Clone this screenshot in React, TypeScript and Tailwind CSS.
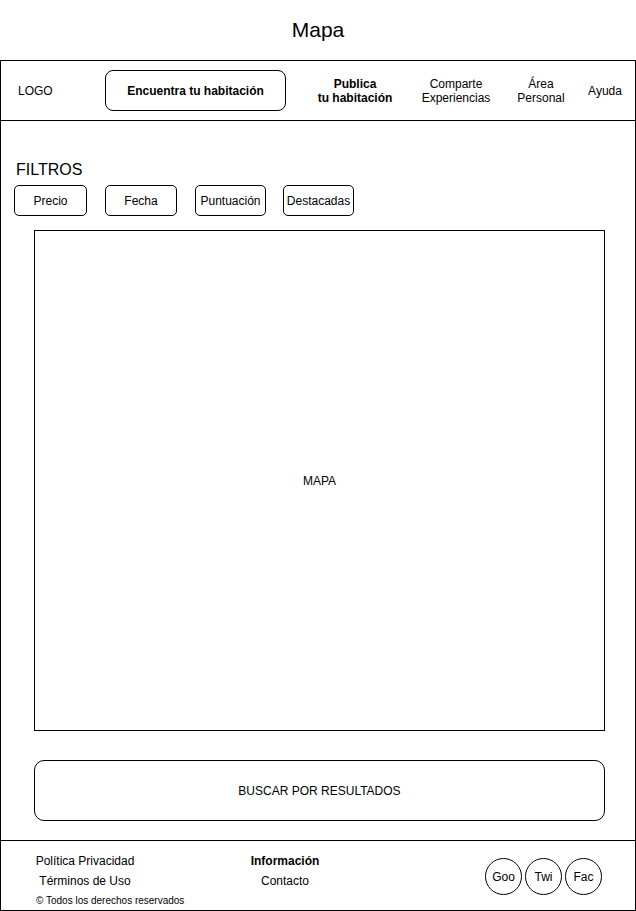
import React from "react";

const font = { fontFamily: '"Liberation Sans", Arial, sans-serif' };

export default function App() {
  return (
    <div className="w-[636px] h-[911px] bg-white text-black text-[12px]" style={font}>
      <div className="h-[60px] flex items-center justify-center text-[21px] leading-none pb-[2px]">Mapa</div>
      <div className="w-[636px] h-[851px] border border-black flex flex-col">
        {/* Header */}
        <div className="h-[60px] shrink-0 border-b border-black flex items-center whitespace-nowrap">
          <div className="w-[104px] pl-[17px]">LOGO</div>
          <div className="w-[181px] h-[41px] border border-black rounded-[8px] flex items-center justify-center font-bold">
            Encuentra tu habitación
          </div>
          <div className="ml-[14px] w-[110px] flex flex-col items-center font-bold leading-[14px]">
            <span>Publica</span>
            <span>tu habitación</span>
          </div>
          <div className="w-[92px] flex flex-col items-center leading-[14px]">
            <span>Comparte</span>
            <span>Experiencias</span>
          </div>
          <div className="w-[78px] flex flex-col items-center leading-[14px]">
            <span>Área</span>
            <span>Personal</span>
          </div>
          <div className="w-[50px] flex justify-center">Ayuda</div>
        </div>

        {/* Main */}
        <div className="flex-1 flex flex-col">
          <div className="mt-[39px] ml-[15px] text-[16px] leading-[20px]">FILTROS</div>
          <div className="mt-[5px] ml-[13px] flex">
            <div className="w-[73px] h-[31px] border border-black rounded-[5px] flex items-center justify-center">Precio</div>
            <div className="ml-[18px] w-[72px] h-[31px] border border-black rounded-[5px] flex items-center justify-center">Fecha</div>
            <div className="ml-[18px] w-[71px] h-[31px] border border-black rounded-[5px] flex items-center justify-center">Puntuación</div>
            <div className="ml-[17px] w-[71px] h-[31px] border border-black rounded-[5px] flex items-center justify-center">Destacadas</div>
          </div>
          <div className="mt-[14px] ml-[33px] w-[571px] h-[501px] border border-black flex items-center justify-center">
            MAPA
          </div>
          <div className="mt-[29px] ml-[33px] w-[571px] h-[61px] border border-black rounded-[10px] flex items-center justify-center">
            BUSCAR POR RESULTADOS
          </div>
        </div>

        {/* Footer */}
        <div className="h-[70px] shrink-0 border-t border-black flex whitespace-nowrap">
          <div className="ml-[35px] w-[199px] pt-[10px] flex flex-col">
            <div className="w-[98px] flex flex-col items-center leading-[20px]">
              <span>Política Privacidad</span>
              <span>Términos de Uso</span>
            </div>
            <div className="mt-[4px] text-[10px] leading-[12px]">© Todos los derechos reservados</div>
          </div>
          <div className="w-[100px] pt-[10px] flex flex-col items-center leading-[20px]">
            <span className="font-bold">Información</span>
            <span>Contacto</span>
          </div>
          <div className="ml-[150px] mt-[17px] flex gap-[3px] self-start">
            <div className="w-[37px] h-[37px] rounded-full border border-black flex items-center justify-center">Goo</div>
            <div className="w-[37px] h-[37px] rounded-full border border-black flex items-center justify-center">Twi</div>
            <div className="w-[37px] h-[37px] rounded-full border border-black flex items-center justify-center">Fac</div>
          </div>
        </div>
      </div>
    </div>
  );
}
